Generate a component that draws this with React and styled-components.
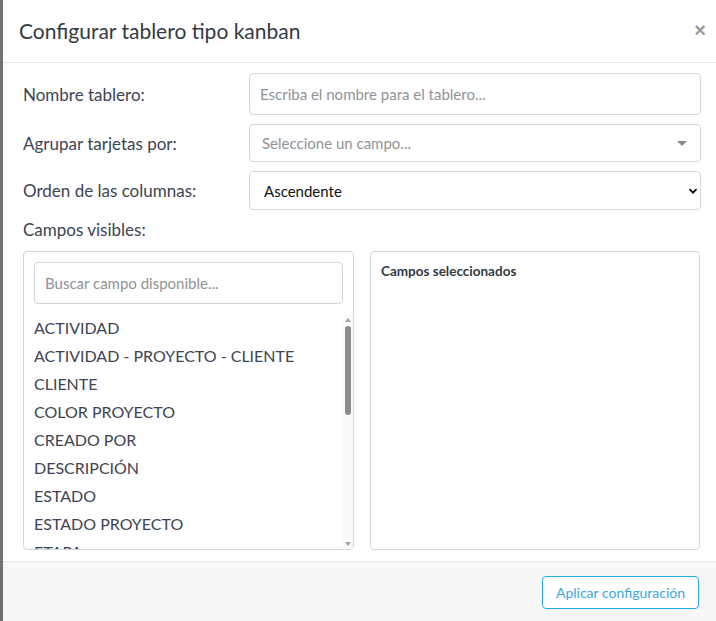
import React, { useState } from 'react';
import styled, { createGlobalStyle } from 'styled-components';

const GlobalStyle = createGlobalStyle`
    html, body {
        margin: 0;
        padding: 0;
        height: 100%;
        background: #6f7275;
        font-family: Lato, "Open Sans", sans-serif;
        overflow: hidden;
    }
    #root {
        height: 100%;
    }
`;

const campos = [
    'ACTIVIDAD',
    'ACTIVIDAD - PROYECTO - CLIENTE',
    'CLIENTE',
    'COLOR PROYECTO',
    'CREADO POR',
    'DESCRIPCIÓN',
    'ESTADO',
    'ESTADO PROYECTO',
    'ETAPA',
    'FECHA CREACIÓN',
    'FECHA FIN',
    'FECHA INICIO',
    'HORAS ESTIMADAS',
    'NOMBRE',
    'PRIORIDAD',
    'PROYECTO',
    'RESPONSABLE',
    'TIPO',
    'USUARIO',
    'VALOR'
];

function App() {
    const [nombre, setNombre] = useState('');
    const [orden, setOrden] = useState('asc');
    const [buscar, setBuscar] = useState('');

    const filtrados = campos.filter((c) => c.toLowerCase().includes(buscar.toLowerCase()));

    return (
        <>
            <GlobalStyle />
            <Modal>
                <Header>
                    <h4>Configurar tablero tipo kanban</h4>
                    <Close type="button">×</Close>
                </Header>

                <Body>
                    <FormRow>
                        <Label>Nombre tablero:</Label>
                        <Input
                            height={42}
                            placeholder="Escriba el nombre para el tablero..."
                            value={nombre}
                            onChange={(e) => setNombre(e.target.value)}
                        />
                    </FormRow>

                    <FormRow>
                        <Label>Agrupar tarjetas por:</Label>
                        <FakeSelect>
                            <span>Seleccione un campo...</span>
                            <Caret />
                        </FakeSelect>
                    </FormRow>

                    <FormRow>
                        <Label>Orden de las columnas:</Label>
                        <SelectWrap>
                            <Select value={orden} onChange={(e) => setOrden(e.target.value)}>
                                <option value="asc">Ascendente</option>
                                <option value="desc">Descendente</option>
                            </Select>
                            <Chevron viewBox="0 0 10 10">
                                <path d="M1.5 3.2 L5 6.7 L8.5 3.2" fill="none" stroke="#111" strokeWidth="1.9" />
                            </Chevron>
                        </SelectWrap>
                    </FormRow>

                    <Label className="visibles">Campos visibles:</Label>

                    <Panels>
                        <Panel>
                            <Input
                                height={42}
                                placeholder="Buscar campo disponible..."
                                value={buscar}
                                onChange={(e) => setBuscar(e.target.value)}
                            />
                            <ListArea>
                                <FieldList>
                                    {filtrados.map((campo) => (
                                        <li key={campo}>{campo}</li>
                                    ))}
                                </FieldList>
                                <ScrollTrack>
                                    <Arrow up />
                                    <Thumb />
                                    <Arrow />
                                </ScrollTrack>
                            </ListArea>
                        </Panel>
                        <Panel>
                            <PanelTitle>Campos seleccionados</PanelTitle>
                        </Panel>
                    </Panels>
                </Body>

                <Footer>
                    <OutlineButton type="button">Aplicar configuración</OutlineButton>
                </Footer>
            </Modal>
        </>
    );
}

export default App;

const Modal = styled.div`
    margin-left: 3px;
    height: 100%;
    background: #fff;
    display: flex;
    flex-direction: column;
    color: #3a4150;
`;

const Header = styled.div`
    flex-shrink: 0;
    box-sizing: border-box;
    height: 63px;
    display: flex;
    align-items: center;
    justify-content: space-between;
    padding: 0 10px 2px 16px;
    border-bottom: 1px solid #e4e6ea;

    h4 {
        margin: 0;
        font-size: 21px;
        font-weight: 400;
        color: #333a44;
    }
`;

const Close = styled.button`
    border: 0;
    background: transparent;
    color: #9a9a9a;
    font-size: 20px;
    font-weight: 700;
    line-height: 1;
    padding: 0;
    cursor: pointer;
`;

const Body = styled.div`
    flex: 1;
    min-height: 0;
    padding: 10px 15px 11px 20px;
    display: flex;
    flex-direction: column;

    .visibles {
        margin: 0 0 11px;
    }
`;

const FormRow = styled.div`
    display: grid;
    grid-template-columns: 226px 1fr;
    align-items: center;
    margin-bottom: 9px;
`;

const Label = styled.label`
    font-size: 17px;
    color: #3d4453;
`;

const Input = styled.input`
    box-sizing: border-box;
    width: 100%;
    height: ${(p) => p.height}px;
    flex-shrink: 0;
    border: 1px solid #d3d6dc;
    border-radius: 4px;
    padding: 0 10px;
    font-family: inherit;
    font-size: 15px;
    color: #333;
    outline: none;

    &::placeholder {
        color: #8f9399;
    }
`;

const FakeSelect = styled.div`
    box-sizing: border-box;
    height: 38px;
    border: 1px solid #d3d6dc;
    border-radius: 4px;
    padding: 0 12px;
    display: flex;
    align-items: center;
    justify-content: space-between;
    font-size: 15px;
    color: #8f9399;
`;

const Caret = styled.span`
    width: 0;
    height: 0;
    border-left: 5px solid transparent;
    border-right: 5px solid transparent;
    border-top: 5px solid #888;
    margin-right: 1px;
`;

const SelectWrap = styled.div`
    position: relative;
`;

const Select = styled.select`
    box-sizing: border-box;
    width: 100%;
    height: 39px;
    border: 1px solid #d3d6dc;
    border-radius: 4px;
    padding: 0 14px;
    font-family: inherit;
    font-size: 15px;
    color: #111;
    background: #fff;
    appearance: none;
    outline: none;
`;

const Chevron = styled.svg`
    position: absolute;
    right: 3px;
    top: 15px;
    width: 10px;
    height: 10px;
    pointer-events: none;
`;

const Panels = styled.div`
    display: grid;
    grid-template-columns: 331px 330px;
    column-gap: 16px;
    flex: 1;
    min-height: 0;
`;

const Panel = styled.div`
    box-sizing: border-box;
    height: 299px;
    border: 1px solid #d3d6dc;
    border-radius: 4px;
    padding: 10px 0 0 10px;
    display: flex;
    flex-direction: column;
    overflow: hidden;

    > input {
        width: 309px;
    }
`;

const PanelTitle = styled.div`
    font-size: 13.5px;
    font-weight: 700;
    color: #333a44;
    padding-top: 1px;
`;

const ListArea = styled.div`
    flex: 1;
    min-height: 0;
    display: flex;
    margin-top: 10px;
`;

const FieldList = styled.ul`
    list-style: none;
    margin: 0;
    padding: 0;
    flex: 1;
    overflow: hidden;

    li {
        font-size: 16px;
        line-height: 28px;
        color: #3d4453;
        white-space: nowrap;
    }
`;

const ScrollTrack = styled.div`
    width: 10px;
    background: #fafafa;
    display: flex;
    flex-direction: column;
    align-items: center;
    padding: 4px 0 3px;
`;

const Arrow = styled.span`
    width: 0;
    height: 0;
    border-left: 3px solid transparent;
    border-right: 3px solid transparent;
    ${(p) => (p.up ? 'border-bottom: 4px solid #a3a3a3;' : 'border-top: 4px solid #a3a3a3;')}
    margin-top: ${(p) => (p.up ? '0' : 'auto')};
`;

const Thumb = styled.div`
    width: 6px;
    height: 89px;
    margin-top: 4px;
    border-radius: 3px;
    background: #8c8c8c;
`;

const Footer = styled.div`
    flex-shrink: 0;
    box-sizing: border-box;
    height: 60px;
    background: #f7f7f7;
    border-top: 1px solid #e7e8ea;
    display: flex;
    align-items: center;
    justify-content: flex-end;
    padding: 2px 17px 0 0;
`;

const OutlineButton = styled.button`
    height: 33px;
    padding: 0 13px;
    border: 1px solid #23a9e6;
    border-radius: 4px;
    background: #fff;
    color: #3aa8e0;
    font-family: inherit;
    font-size: 14px;
    cursor: pointer;
`;
